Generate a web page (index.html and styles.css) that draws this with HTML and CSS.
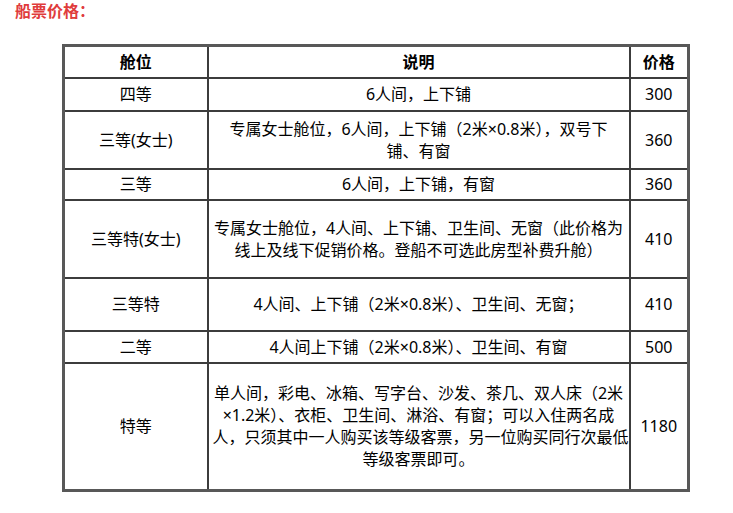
FILE: index.html
```html
<!DOCTYPE html>
<html lang="zh-CN">
<head>
<meta charset="utf-8">
<title>船票价格</title>
<link rel="stylesheet" href="styles.css">
</head>
<body>
<div class="title">船票价格：</div>
<table class="fares">
  <colgroup>
    <col class="c1"><col class="c2"><col class="c3">
  </colgroup>
  <tr class="r-head">
    <th>舱位</th><th>说明</th><th>价格</th>
  </tr>
  <tr class="r1">
    <td>四等</td><td class="desc">6人间，上下铺</td><td>300</td>
  </tr>
  <tr class="r2">
    <td>三等(女士)</td><td class="desc">专属女士舱位，6人间，上下铺（2米×0.8米），双号下<br>铺、有窗</td><td>360</td>
  </tr>
  <tr class="r3">
    <td>三等</td><td class="desc">6人间，上下铺，有窗</td><td>360</td>
  </tr>
  <tr class="r4">
    <td>三等特(女士)</td><td class="desc">专属女士舱位，4人间、上下铺、卫生间、无窗（此价格为<br>线上及线下促销价格。登船不可选此房型补费升舱）</td><td>410</td>
  </tr>
  <tr class="r5">
    <td>三等特</td><td class="desc">4人间、上下铺（2米×0.8米）、卫生间、无窗；</td><td>410</td>
  </tr>
  <tr class="r6">
    <td>二等</td><td class="desc">4人间上下铺（2米×0.8米）、卫生间、有窗</td><td>500</td>
  </tr>
  <tr class="r7">
    <td>特等</td><td class="desc">单人间，彩电、冰箱、写字台、沙发、茶几、双人床（2米<br>×1.2米）、衣柜、卫生间、淋浴、有窗；可以入住两名成<br>人，只须其中一人购买该等级客票，另一位购买同行次最低<br>等级客票即可。</td><td>1180</td>
  </tr>
</table>
</body>
</html>
```

FILE: styles.css
```css
html, body {
  margin: 0;
  padding: 0;
  background: #ffffff;
}
body {
  font-family: "Noto Sans", "Noto Sans CJK SC", sans-serif;
  color: #000000;
}
.title {
  padding-left: 15px;
  font-size: 16px;
  line-height: 22px;
  font-weight: bold;
  color: #e03c3c;
}
.fares {
  margin: 22px 0 0 62px;
  border-collapse: collapse;
  table-layout: fixed;
  width: 627px;
  border: 3px solid #585858;
  font-size: 16px;
  line-height: 22px;
}
.c1 { width: 144px; }
.c2 { width: 422px; }
.c3 { width: 59px; }
.fares th,
.fares td {
  border: 2px solid #3c3c3c;
  padding: 0 4px;
  text-align: center;
  vertical-align: middle;
}
.fares th {
  font-weight: bold;
}
.desc {
  white-space: nowrap;
}
.r-head { height: 32px; }
.r1 { height: 33px; }
.r2 { height: 58px; }
.r3 { height: 31px; }
.r4 { height: 78px; }
.r5 { height: 53px; }
.r6 { height: 32px; }
.r7 { height: 128px; }
```
